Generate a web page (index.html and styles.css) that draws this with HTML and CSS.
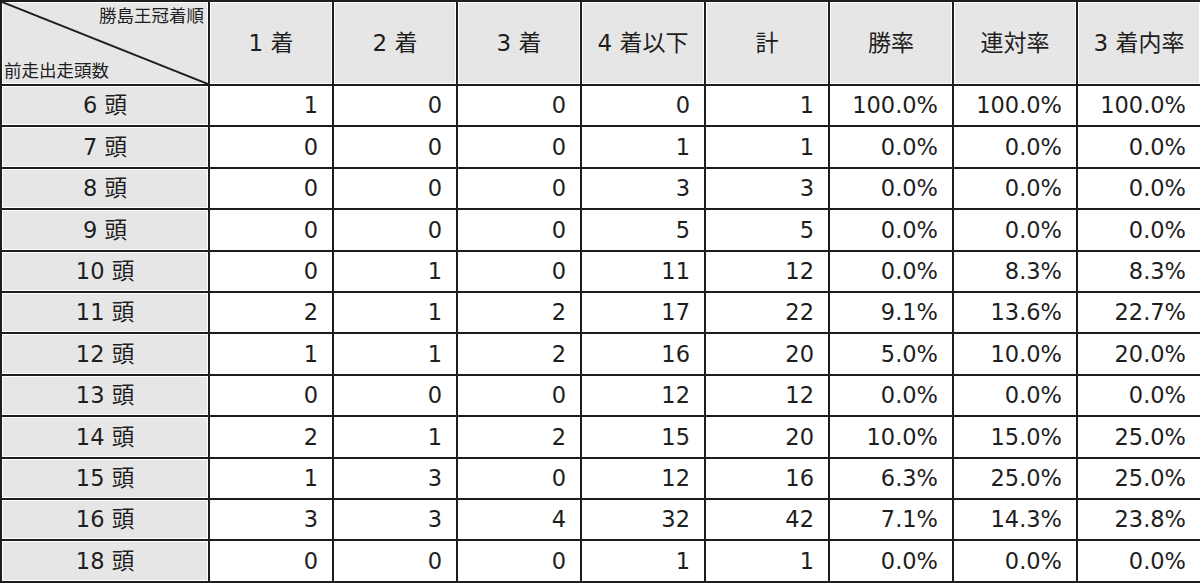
FILE: index.html
```html
<!DOCTYPE html>
<html lang="ja">
<head>
<meta charset="utf-8">
<link rel="stylesheet" href="styles.css">
</head>
<body>
<table class="stats">
  <colgroup>
    <col class="c-head">
    <col class="c-num"><col class="c-num"><col class="c-num"><col class="c-num">
    <col class="c-num"><col class="c-num"><col class="c-num"><col class="c-num">
  </colgroup>
  <thead>
    <tr class="head-row">
      <th class="corner">
        <svg class="diag" viewBox="0 0 100 100" preserveAspectRatio="none"><line x1="0" y1="0" x2="100" y2="100" stroke="#1e1e1e" stroke-width="2" vector-effect="non-scaling-stroke"/></svg>
        <span class="corner-top">勝島王冠着順</span>
        <span class="corner-bottom">前走出走頭数</span>
      </th>
      <th>1 着</th>
      <th>2 着</th>
      <th>3 着</th>
      <th>4 着以下</th>
      <th>計</th>
      <th>勝率</th>
      <th>連対率</th>
      <th>3 着内率</th>
    </tr>
  </thead>
  <tbody>
    <tr><th>6 頭</th><td>1</td><td>0</td><td>0</td><td>0</td><td>1</td><td>100.0%</td><td>100.0%</td><td>100.0%</td></tr>
    <tr><th>7 頭</th><td>0</td><td>0</td><td>0</td><td>1</td><td>1</td><td>0.0%</td><td>0.0%</td><td>0.0%</td></tr>
    <tr><th>8 頭</th><td>0</td><td>0</td><td>0</td><td>3</td><td>3</td><td>0.0%</td><td>0.0%</td><td>0.0%</td></tr>
    <tr><th>9 頭</th><td>0</td><td>0</td><td>0</td><td>5</td><td>5</td><td>0.0%</td><td>0.0%</td><td>0.0%</td></tr>
    <tr><th>10 頭</th><td>0</td><td>1</td><td>0</td><td>11</td><td>12</td><td>0.0%</td><td>8.3%</td><td>8.3%</td></tr>
    <tr><th>11 頭</th><td>2</td><td>1</td><td>2</td><td>17</td><td>22</td><td>9.1%</td><td>13.6%</td><td>22.7%</td></tr>
    <tr><th>12 頭</th><td>1</td><td>1</td><td>2</td><td>16</td><td>20</td><td>5.0%</td><td>10.0%</td><td>20.0%</td></tr>
    <tr><th>13 頭</th><td>0</td><td>0</td><td>0</td><td>12</td><td>12</td><td>0.0%</td><td>0.0%</td><td>0.0%</td></tr>
    <tr><th>14 頭</th><td>2</td><td>1</td><td>2</td><td>15</td><td>20</td><td>10.0%</td><td>15.0%</td><td>25.0%</td></tr>
    <tr><th>15 頭</th><td>1</td><td>3</td><td>0</td><td>12</td><td>16</td><td>6.3%</td><td>25.0%</td><td>25.0%</td></tr>
    <tr><th>16 頭</th><td>3</td><td>3</td><td>4</td><td>32</td><td>42</td><td>7.1%</td><td>14.3%</td><td>23.8%</td></tr>
    <tr><th>18 頭</th><td>0</td><td>0</td><td>0</td><td>1</td><td>1</td><td>0.0%</td><td>0.0%</td><td>0.0%</td></tr>
  </tbody>
</table>
</body>
</html>
```

FILE: styles.css
```css
html, body {
  margin: 0;
  padding: 0;
  background: #ffffff;
}

.stats {
  width: 1200px;
  table-layout: fixed;
  border-collapse: collapse;
  font-family: "DejaVu Sans", "Noto Sans CJK JP", sans-serif;
  color: #1e1e1e;
  font-size: 22.5px;
}

.c-head { width: 208px; }
.c-num { width: 124px; }

.stats th,
.stats td {
  border: 2px solid #1e1e1e;
  padding: 0 14px 0 0;
  font-weight: normal;
  line-height: 1;
}

.stats td {
  text-align: right;
  background: #ffffff;
}

.stats th {
  background: #e7e6e6;
  text-align: center;
  padding: 0;
  box-shadow: inset 1px 1px 0 #ffffff, inset -1px -1px 0 #ffffff;
}

.stats thead th {
  font-family: "DejaVu Sans", "Noto Sans CJK JP", sans-serif;
  font-size: 23px;
}

.head-row {
  height: 84px;
}

.stats tbody tr {
  height: 41.4px;
}

.corner {
  position: relative;
}

.diag {
  position: absolute;
  left: 0;
  top: 0;
  width: 100%;
  height: 100%;
}

.stats thead .corner-top,
.stats thead .corner-bottom {
  position: absolute;
  font-family: "Noto Sans CJK JP", sans-serif;
  font-size: 17.5px;
  line-height: 1;
}

.corner-top {
  top: 4px;
  right: 4px;
}

.corner-bottom {
  left: 2px;
  bottom: 6px;
}
```
